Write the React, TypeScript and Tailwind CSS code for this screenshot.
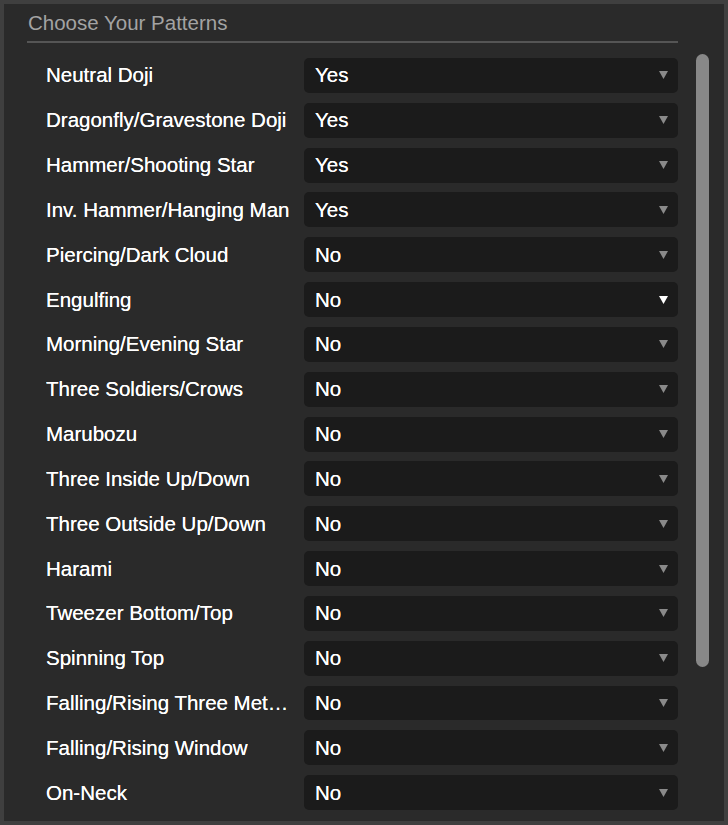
import React from "react";

const rows: [string, string][] = [
  ["Neutral Doji", "Yes"],
  ["Dragonfly/Gravestone Doji", "Yes"],
  ["Hammer/Shooting Star", "Yes"],
  ["Inv. Hammer/Hanging Man", "Yes"],
  ["Piercing/Dark Cloud", "No"],
  ["Engulfing", "No"],
  ["Morning/Evening Star", "No"],
  ["Three Soldiers/Crows", "No"],
  ["Marubozu", "No"],
  ["Three Inside Up/Down", "No"],
  ["Three Outside Up/Down", "No"],
  ["Harami", "No"],
  ["Tweezer Bottom/Top", "No"],
  ["Spinning Top", "No"],
  ["Falling/Rising Three Methods", "No"],
  ["Falling/Rising Window", "No"],
  ["On-Neck", "No"],
];

function Arrow({ active }: { active: boolean }) {
  return (
    <svg width="9" height="8" viewBox="0 0 9 8" className="shrink-0">
      <path d="M0 0 L9 0 L4.5 8 Z" fill={active ? "#ffffff" : "#8a8a8a"} />
    </svg>
  );
}

export default function App() {
  return (
    <div
      className="w-[728px] h-[825px] bg-[#2a2a2a] border-4 border-[#3f3f3f] overflow-hidden flex flex-col"
      style={{ fontFamily: '"Liberation Sans", Arial, sans-serif' }}
    >
      <div className="pl-[24px] mt-[7px] text-[20.5px] leading-[24px] text-[#a3a3a3]">
        Choose Your Patterns
      </div>
      <div className="ml-[23px] mt-[6px] w-[651px] h-[2px] bg-[#555555]" />
      <div className="flex flex-row mt-[11px]">
        <div className="w-[674px] pl-[42px] flex flex-col gap-[9.95px] pt-[4px]">
          {rows.map(([label, value], i) => (
            <div key={label} className="flex items-center h-[34.9px]">
              <div className="w-[246px] truncate text-white text-[20.5px] leading-[24px] [text-shadow:0_0_0.4px_#fff]">
                {label}
              </div>
              <div className="ml-[12px] flex-1 h-full bg-[#1b1b1b] rounded-[5px] flex items-center justify-between pl-[11px] pr-[10px]">
                <span className="text-white text-[20.5px] leading-[24px] [text-shadow:0_0_0.4px_#fff]">{value}</span>
                <Arrow active={i === 5} />
              </div>
            </div>
          ))}
        </div>
        <div className="ml-[18px] w-[13px] h-[613px] rounded-full bg-[#888888]" />
      </div>
    </div>
  );
}
